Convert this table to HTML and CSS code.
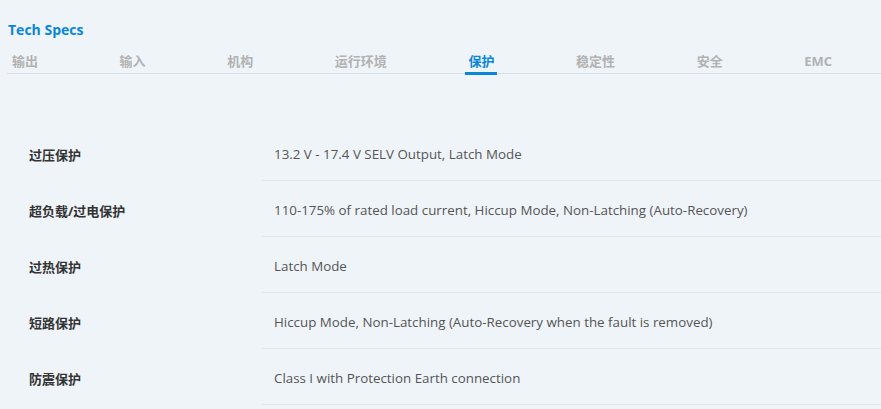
FILE: index.html
```html
<!DOCTYPE html>
<html lang="zh">
<head>
<meta charset="utf-8">
<link rel="stylesheet" href="styles.css">
</head>
<body>
<div class="page">
  <h2 class="title">Tech Specs</h2>
  <div class="tabs">
    <span class="tab">输出</span>
    <span class="tab">输入</span>
    <span class="tab">机构</span>
    <span class="tab">运行环境</span>
    <span class="tab active">保护</span>
    <span class="tab">稳定性</span>
    <span class="tab">安全</span>
    <span class="tab">EMC</span>
  </div>
  <div class="specs">
    <div class="row"><div class="label">过压保护</div><div class="value">13.2 V - 17.4 V SELV Output, Latch Mode</div></div>
    <div class="row"><div class="label">超负载/过电保护</div><div class="value">110-175% of rated load current, Hiccup Mode, Non-Latching (Auto-Recovery)</div></div>
    <div class="row"><div class="label">过热保护</div><div class="value">Latch Mode</div></div>
    <div class="row"><div class="label">短路保护</div><div class="value">Hiccup Mode, Non-Latching (Auto-Recovery when the fault is removed)</div></div>
    <div class="row"><div class="label">防震保护</div><div class="value">Class I with Protection Earth connection</div></div>
  </div>
</div>
</body>
</html>
```
FILE: styles.css
```css
html, body {
  margin: 0;
  padding: 0;
  background: #eff4f9;
}
body {
  font-family: "Open Sans", "Noto Sans CJK SC", sans-serif;
}
.page {
  padding: 19px 0 0 7px;
}
.title {
  margin: 0 0 0 1px;
  font-size: 14px;
  line-height: 22px;
  font-weight: 700;
  color: #0a86d9;
}
.tabs {
  display: flex;
  gap: 81.6px;
  padding-left: 5px;
  margin-top: 8px;
  border-bottom: 1px solid #d8dee5;
  height: 25px;
  box-sizing: border-box;
}
.tab {
  font-size: 13px;
  font-weight: 700;
  color: #b2b2b2;
  line-height: 24px;
  position: relative;
}
.tab.active {
  color: #0a86d9;
}
.tab.active::after {
  content: "";
  position: absolute;
  left: -3px;
  right: -3px;
  bottom: -2px;
  height: 3px;
  background: #0a86d9;
}
.specs {
  margin-top: 51px;
}
.row {
  display: grid;
  grid-template-columns: 255px 1fr;
  height: 56px;
}
.label {
  display: flex;
  align-items: center;
  padding-left: 22px;
  padding-top: 2px;
  font-size: 13px;
  font-weight: 700;
  color: #333;
}
.value {
  display: flex;
  align-items: center;
  padding-left: 12px;
  padding-top: 2px;
  font-size: 13.35px;
  color: #555;
  border-bottom: 1px solid #dfe9f4;
}
```
